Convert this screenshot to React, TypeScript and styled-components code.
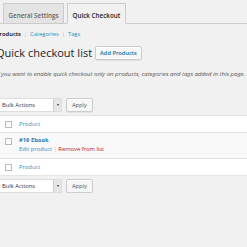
import styled, { createGlobalStyle } from 'styled-components';

const GlobalStyle = createGlobalStyle`
    html, body {
        margin: 0;
        padding: 0;
        background: #f1f1f1;
        font-family: "Open Sans", "Liberation Sans", sans-serif;
        color: #444;
        overflow: hidden;
    }
`;

const Wrap = styled.div`
    width: 260px;
    margin-left: -4px;
`;

const NavTabs = styled.div`
    display: flex;
    gap: 3px;
    padding: 3px 0 0 7px;
    border-bottom: 1px solid #ccc;
`;

const Tab = styled.div<{ $active?: boolean }>`
    padding: 8px 4.5px 3px;
    margin-bottom: -1px;
    font-size: 6.3px;
    line-height: 8px;
    font-weight: 600;
    color: ${({ $active }) => ($active ? '#222' : '#666')};
    background: ${({ $active }) => ($active ? '#f1f1f1' : '#e4e4e4')};
    border: 1px solid #ccc;
    border-bottom-color: ${({ $active }) => ($active ? '#f1f1f1' : '#ccc')};
`;

const SubNav = styled.div`
    display: flex;
    align-items: center;
    gap: 3px;
    margin-top: 6px;
    font-size: 5.8px;
    line-height: 8px;
    color: #bbb;
`;

const SubLink = styled.span<{ $current?: boolean }>`
    color: ${({ $current }) => ($current ? '#000' : '#2a8fbd')};
    font-weight: ${({ $current }) => ($current ? 600 : 400)};
`;

const HeadingRow = styled.div`
    display: flex;
    align-items: center;
    gap: 3px;
    margin-top: 8px;
`;

const Heading = styled.h2`
    margin: 0;
    font-size: 11px;
    line-height: 14px;
    font-weight: 400;
    color: #222;
`;

const Button = styled.button`
    font-family: inherit;
    font-size: 5.7px;
    font-weight: 600;
    line-height: 8px;
    color: #0074a2;
    background: #f7f7f7;
    border: 1px solid #ccc;
    border-radius: 2px;
    padding: 2px 4px;
    box-shadow: 0 1px 0 #fff inset, 0 1px 0 rgba(0, 0, 0, 0.06);
`;

const Description = styled.p`
    margin: 10px 0 0;
    font-size: 6px;
    line-height: 8px;
    font-style: italic;
    color: #555;
    white-space: nowrap;
`;

const TableNav = styled.div`
    display: flex;
    align-items: center;
    gap: 4px;
`;

const Select = styled.div`
    display: flex;
    align-items: center;
    justify-content: space-between;
    width: 66px;
    height: 14px;
    padding-left: 5px;
    box-sizing: border-box;
    background: #fff;
    border: 1px solid #ddd;
    font-size: 5.8px;
    color: #333;
`;

const Arrow = styled.div`
    width: 7px;
    height: 12px;
    background: #e6e6e6;
    border-left: 1px solid #ccc;
    display: flex;
    align-items: center;
    justify-content: center;
    &::after {
        content: '';
        border-left: 1.5px solid transparent;
        border-right: 1.5px solid transparent;
        border-top: 2px solid #333;
    }
`;

const ApplyButton = styled(Button)`
    color: #555;
    font-weight: 400;
    padding: 2px 5px;
`;

const Table = styled.div`
    margin: 3px 0;
    background: #fff;
    border-top: 1px solid #e5e5e5;
    border-bottom: 1px solid #e5e5e5;
`;

const Row = styled.div<{ $alt?: boolean; $head?: boolean }>`
    display: flex;
    align-items: ${({ $head }) => ($head ? 'center' : 'flex-start')};
    gap: 7px;
    padding: ${({ $head }) => ($head ? '4px 0 4px 9px' : '3px 0 4px 9px')};
    background: ${({ $alt }) => ($alt ? '#f9f9f9' : '#fff')};
    border-bottom: 1px solid #e1e1e1;
    &:last-child {
        border-bottom: 0;
        border-top: 1px solid #e1e1e1;
        margin-top: -1px;
    }
`;

const Check = styled.span<{ $row?: boolean }>`
    width: 5px;
    height: 5px;
    margin-top: ${({ $row }) => ($row ? '1.5px' : 0)};
    border: 1px solid #bbb;
    background: #fdfdfd;
    flex-shrink: 0;
`;

const ColLink = styled.span`
    font-size: 5.8px;
    line-height: 8px;
    color: #2a8fbd;
`;

const Cell = styled.div`
    display: flex;
    flex-direction: column;
    font-size: 5.8px;
    line-height: 9px;
`;

const Title = styled.span`
    font-weight: 700;
    color: #1f7fae;
`;

const Actions = styled.span`
    color: #bbb;
`;

const Edit = styled.span`
    color: #2a8fbd;
`;

const Remove = styled.span`
    color: #b32020;
`;

const Spacer = styled.div`
    height: 20px;
`;

function BulkBar() {
    return (
        <TableNav>
            <Select>
                Bulk Actions
                <Arrow />
            </Select>
            <ApplyButton>Apply</ApplyButton>
        </TableNav>
    );
}

export default function App() {
    return (
        <Wrap>
            <GlobalStyle />
            <NavTabs>
                <Tab>General Settings</Tab>
                <Tab $active>Quick Checkout</Tab>
            </NavTabs>
            <SubNav>
                <SubLink $current>Products</SubLink> | <SubLink>Categories</SubLink> | <SubLink>Tags</SubLink>
            </SubNav>
            <HeadingRow>
                <Heading>Quick checkout list</Heading>
                <Button>Add Products</Button>
            </HeadingRow>
            <Description>
                If you want to enable quick checkout only on products, categories and tags added in this page.
            </Description>
            <Spacer />
            <BulkBar />
            <Table>
                <Row $head>
                    <Check />
                    <ColLink>Product</ColLink>
                </Row>
                <Row $alt>
                    <Check $row />
                    <Cell>
                        <Title>#16 Ebook</Title>
                        <Actions>
                            <Edit>Edit product</Edit> | <Remove>Remove from list</Remove>
                        </Actions>
                    </Cell>
                </Row>
                <Row $head>
                    <Check />
                    <ColLink>Product</ColLink>
                </Row>
            </Table>
            <BulkBar />
        </Wrap>
    );
}
